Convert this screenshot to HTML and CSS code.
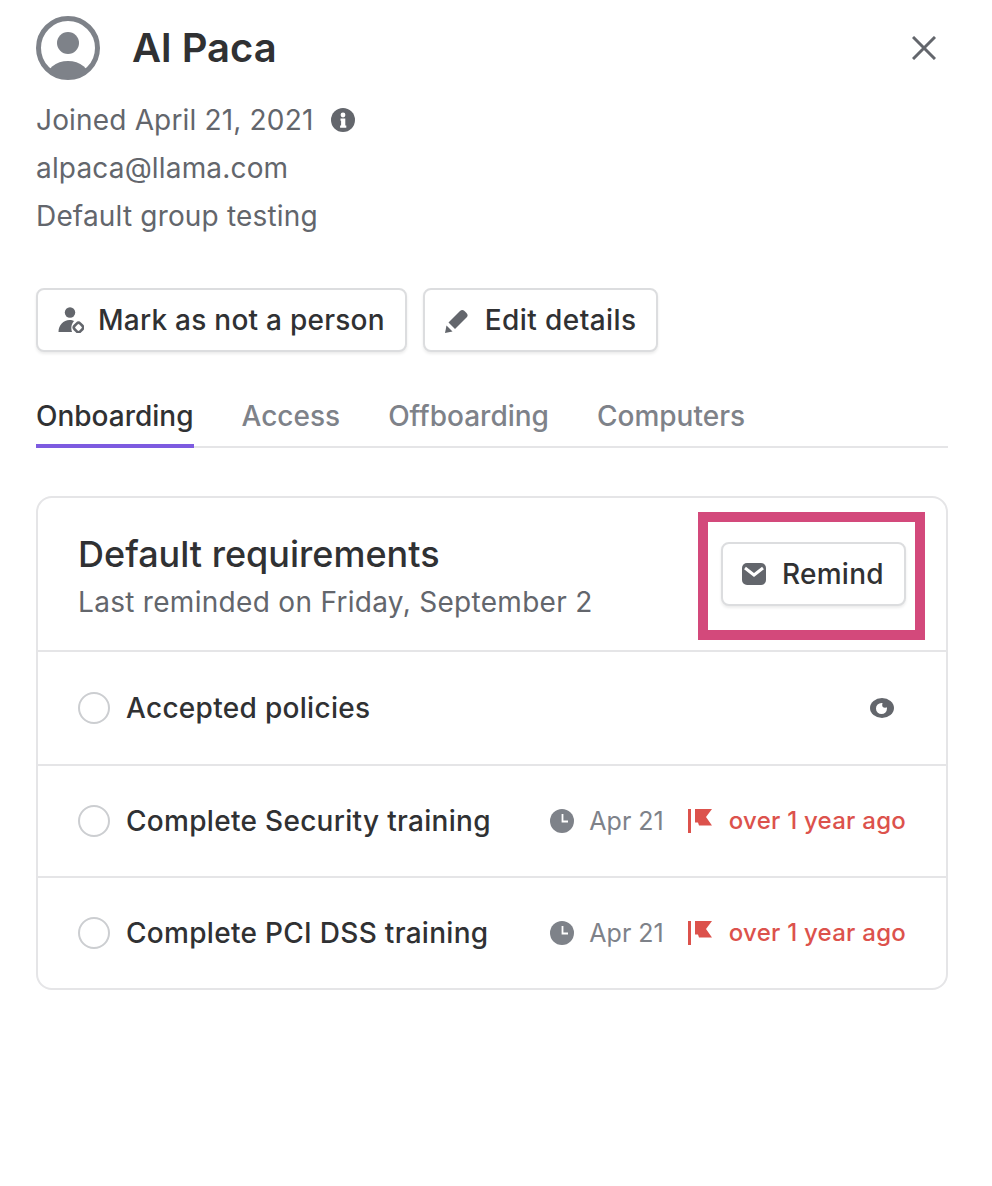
FILE: index.html
```html
<!DOCTYPE html>
<html lang="en">
<head>
<meta charset="utf-8">
<title>Al Paca</title>
<link rel="stylesheet" href="styles.css">
</head>
<body>
<main class="panel">
  <header class="head">
    <svg class="avatar" viewBox="0 0 64 64"><defs><clipPath id="c"><circle cx="32" cy="32" r="29"/></clipPath></defs><circle cx="32" cy="32" r="29.5" fill="none" stroke="#7e8289" stroke-width="5"/><circle cx="32" cy="27" r="11" fill="#7e8289"/><ellipse cx="32" cy="63" rx="22" ry="18" fill="#7e8289" clip-path="url(#c)"/></svg>
    <h1 class="name">Al Paca</h1>
    <svg class="close" viewBox="0 0 24 24"><path d="M1 1L23 23M23 1L1 23" stroke="#63666c" stroke-width="3" fill="none"/></svg>
  </header>
  <div class="meta">
    <p class="meta-line">Joined April 21, 2021<svg class="info" viewBox="0 0 24 24"><circle cx="12" cy="12" r="12" fill="#63666c"/><circle cx="12" cy="7" r="2.400" fill="#fff"/><path d="M9.500 10.500h4.800v7h1v2.200h-6.200v-2.200h1v-4.800h-.6z" fill="#fff"/></svg></p>
    <p class="meta-line">alpaca@llama.com</p>
    <p class="meta-line">Default group testing</p>
  </div>
  <div class="actions">
    <button class="btn"><svg class="ico" viewBox="0 0 26 26"><circle cx="12" cy="5.500" r="5.200" fill="#63666c"/><path d="M.5 25c0-7 5-12 11-12 2 0 3.500.4 4.800 1.100-2.600 2-3.800 6.500-2.300 10.900z" fill="#63666c"/><rect x="16.500" y="16.500" width="8" height="8" rx="2.500" transform="rotate(45 20.500 20.500)" fill="#fff" stroke="#63666c" stroke-width="2.600"/></svg>Mark as not a person</button>
    <button class="btn btn-edit"><svg class="ico" viewBox="0 0 26 26"><path d="M3.500 15.500L15 4a3.200 3.200 0 0 1 4.500 0l2 2a3.200 3.200 0 0 1 0 4.500L10 22z" fill="#63666c"/><path d="M1.500 18.500l6 6L0 26z" fill="#63666c"/></svg>Edit details</button>
  </div>
  <nav class="tabs">
    <a class="tab tab-on">Onboarding</a>
    <a class="tab">Access</a>
    <a class="tab">Offboarding</a>
    <a class="tab">Computers</a>
  </nav>
  <section class="card">
    <div class="card-head">
      <div class="card-title">
        <h2 class="title">Default requirements</h2>
        <p class="sub">Last reminded on Friday, September 2</p>
      </div>
      <div class="highlight">
        <button class="btn btn-remind"><svg class="ico-mail" viewBox="0 0 24 22"><rect width="24" height="22" rx="5" fill="#63666c"/><path d="M3 5l9 7 9-7" fill="none" stroke="#fff" stroke-width="3"/></svg>Remind</button>
      </div>
    </div>
    <div class="row row-first">
      <span class="radio"></span>
      <span class="label">Accepted policies</span>
      <svg class="eye" viewBox="0 0 24 20"><ellipse cx="12" cy="10" rx="12" ry="10" fill="#63666c"/><circle cx="11.500" cy="10.500" r="5.500" fill="#fff"/><circle cx="15" cy="7" r="2.800" fill="#63666c"/></svg>
    </div>
    <div class="row">
      <span class="radio"></span>
      <span class="label">Complete Security training</span>
      <svg class="clock" viewBox="0 0 24 24"><circle cx="12" cy="12" r="12" fill="#7e8289"/><path d="M12.500 5v7.500h5.500" fill="none" stroke="#fff" stroke-width="1.800"/></svg>
      <span class="date">Apr 21</span>
      <svg class="flag" viewBox="0 0 24 24"><path d="M0 0h3v24H0z" fill="#dc524c"/><path d="M7 0h17l-6 8 6 8.500H11l-1-3H7z" fill="#dc524c"/></svg>
      <span class="due">over 1 year ago</span>
    </div>
    <div class="row row-last">
      <span class="radio"></span>
      <span class="label">Complete PCI DSS training</span>
      <svg class="clock" viewBox="0 0 24 24"><circle cx="12" cy="12" r="12" fill="#7e8289"/><path d="M12.500 5v7.500h5.500" fill="none" stroke="#fff" stroke-width="1.800"/></svg>
      <span class="date">Apr 21</span>
      <svg class="flag" viewBox="0 0 24 24"><path d="M0 0h3v24H0z" fill="#dc524c"/><path d="M7 0h17l-6 8 6 8.500H11l-1-3H7z" fill="#dc524c"/></svg>
      <span class="due">over 1 year ago</span>
    </div>
  </section>
</main>
</body>
</html>
```
FILE: styles.css
```css
* { box-sizing: border-box; }
html, body { margin: 0; background: #fff; }
body { font-family: Inter, "Liberation Sans", sans-serif; color: #303133; }
.panel { width: 992px; height: 1186px; padding: 16px 44px 0 36px; overflow: hidden; }
.head { display: flex; align-items: center; height: 64px; }
.avatar { width: 64px; height: 64px; flex: none; }
.name { margin: 0 0 0 32px; font-size: 40px; line-height: 44px; font-weight: 600; flex: 1; }
.close { width: 24px; height: 24px; margin-right: 12px; }
.meta { margin-top: 16px; }
.meta-line { margin: 0; height: 48px; display: flex; align-items: center; font-size: 28px; letter-spacing: .17px; color: #63666c; }
.info { width: 24px; height: 24px; margin-left: 17px; }
.actions { display: flex; gap: 16px; margin-top: 48px; }
.btn { display: inline-flex; align-items: center; height: 64px; padding: 0 20px; background: #fff; border: 2px solid #dcdddf; border-radius: 8px; box-shadow: 0 2px 3px rgba(0,0,0,.08); font: 500 28px Inter, "Liberation Sans", sans-serif; letter-spacing: .25px; color: #303133; }
.btn-edit { letter-spacing: .4px; }
.ico { width: 26px; height: 26px; margin-right: 14px; }
.tabs { display: flex; gap: 48px; margin-top: 32px; height: 64px; border-bottom: 2px solid #e5e5e7; }
.tab { height: 64px; line-height: 64px; font-size: 28px; font-weight: 500; letter-spacing: 0; color: #7e8289; }
.tab-on { color: #303133; border-bottom: 4px solid #7d5be0; }
.card { margin-top: 48px; border: 2px solid #e5e5e7; border-radius: 16px; }
.card-head { display: flex; justify-content: space-between; align-items: center; height: 154px; padding-left: 40px; border-bottom: 2px solid #e5e5e7; }
.card-title { margin-top: 4px; }
.title { margin: 0; font-size: 36px; line-height: 44px; font-weight: 500; }
.sub { margin: 8px 0 0; font-size: 28px; line-height: 36px; letter-spacing: .3px; color: #63666c; }
.highlight { width: 227px; height: 128px; margin: 4px 21px 0 0; border: 10px solid #d3497b; display: flex; align-items: center; }
.btn-remind { padding: 0 20px 0 19px; margin: -4px 0 0 13px; }
.ico-mail { width: 24px; height: 22px; margin-right: 16px; }
.row { display: flex; align-items: center; height: 112px; padding: 0 40px; border-bottom: 2px solid #e5e5e7; font-size: 28px; }
.row-first { height: 114px; }
.row-last { height: 110px; border-bottom: 0; }
.radio { width: 32px; height: 32px; border: 2px solid #ccced1; border-radius: 50%; margin-right: 16px; flex: none; }
.label { font-weight: 500; flex: 1; letter-spacing: .3px; }
.eye { width: 24px; height: 20px; margin-right: 12px; }
.clock { width: 24px; height: 24px; margin-right: 15px; }
.date { font-size: 25px; color: #7e8289; margin-right: 24px; }
.flag { width: 24px; height: 24px; margin-right: 17px; }
.due { font-size: 24px; font-weight: 500; letter-spacing: .25px; color: #dc524c; margin-bottom: 2px; }
```
